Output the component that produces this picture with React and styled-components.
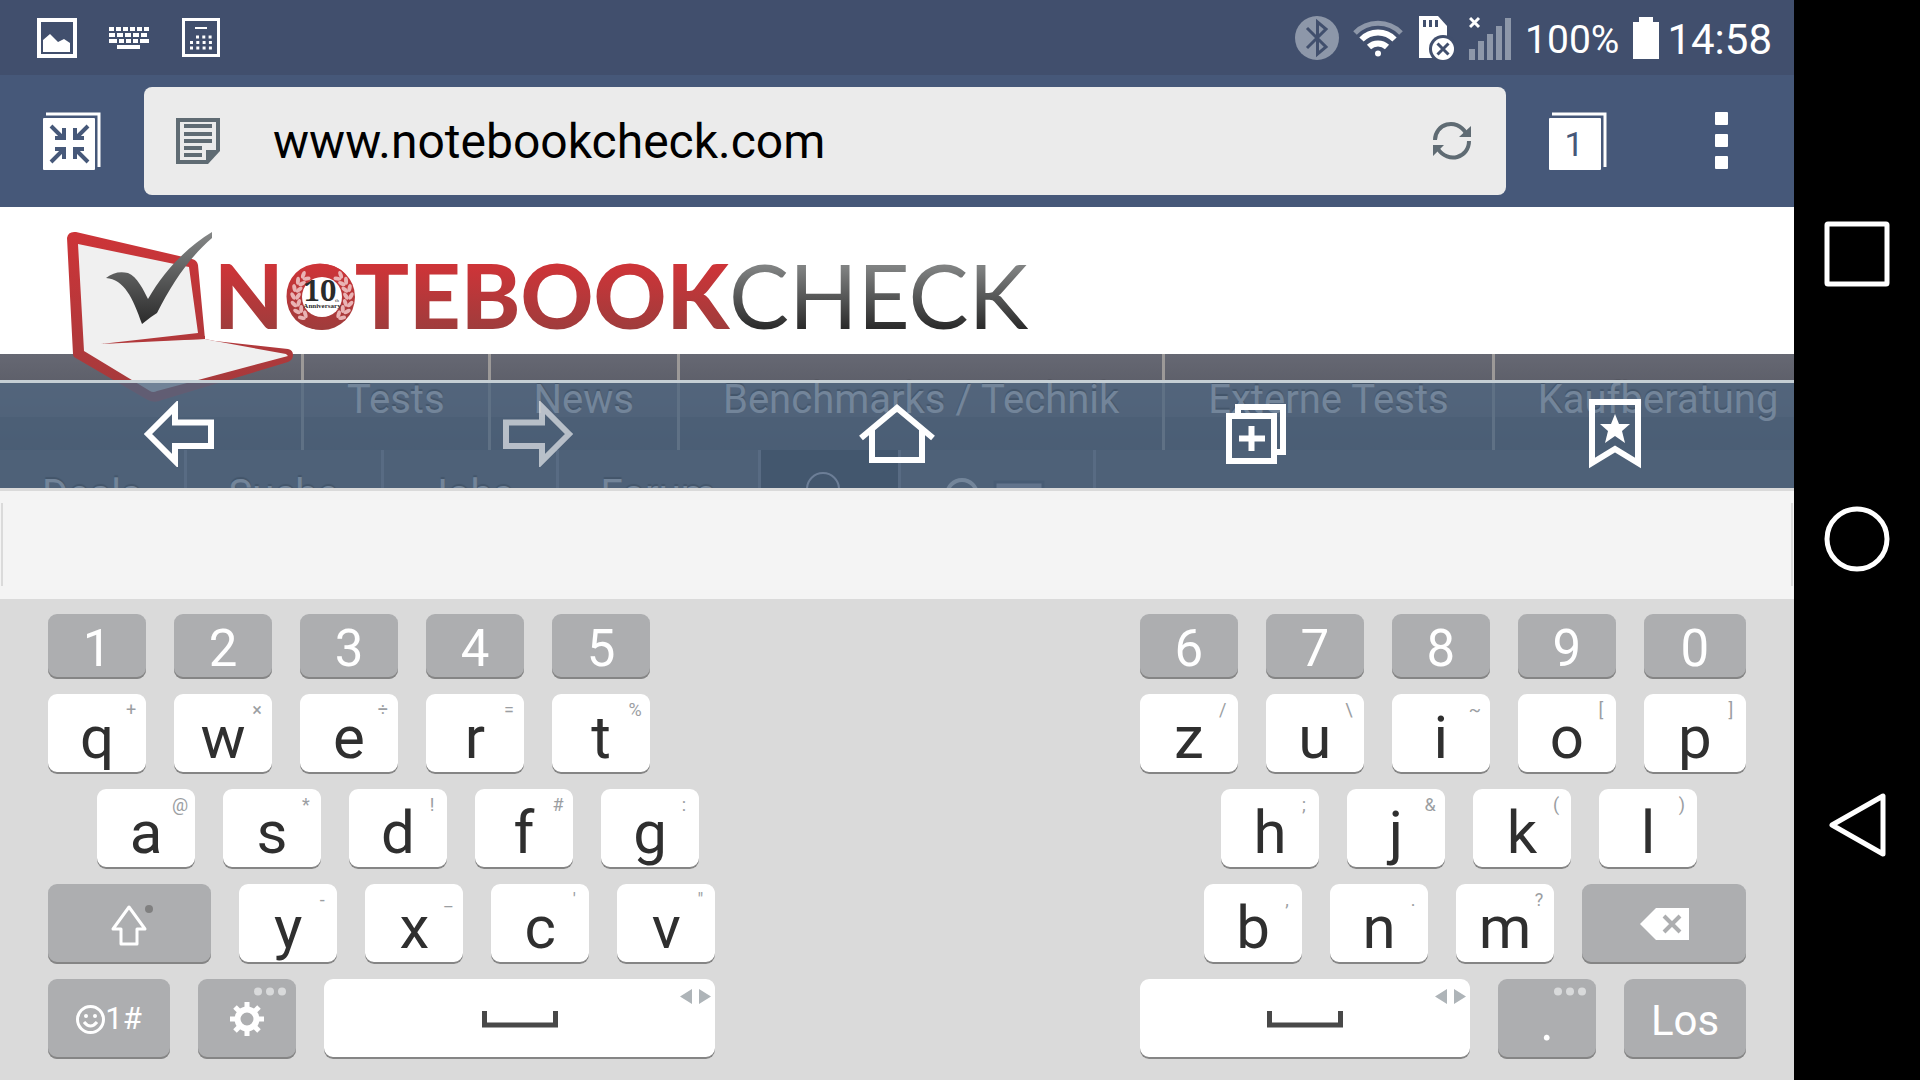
import React from 'react';
import styled, { createGlobalStyle } from 'styled-components';

const GlobalStyle = createGlobalStyle`
  * {
    box-sizing: border-box;
  }

  body {
    margin: 0;
    background: #000;
    font-family: Roboto, 'Noto Sans', sans-serif;
  }

  button {
    border: 0;
    padding: 0;
    background: none;
    font-family: inherit;
    color: inherit;
  }

  svg {
    display: block;
    flex: none;
  }
`;

const Device = styled.div`
  display: flex;
  min-height: 100vh;
`;

const Screen = styled.main`
  flex: 1;
  min-width: 0;
  display: flex;
  flex-direction: column;
`;

// ---------- status bar ----------

const StatusBar = styled.header`
  display: flex;
  align-items: center;
  justify-content: space-between;
  height: 75px;
  padding: 0 22px 0 37px;
  background: #414f6d;
  color: #fff;
`;

const StatusGroup = styled.div`
  display: flex;
  align-items: center;
  gap: ${props => props.$gap}px;
`;

const StatusText = styled.span`
  font-size: ${props => props.$size}px;
  line-height: 48px;
  padding-top: 4px;
`;

// ---------- address bar ----------

const AddressBar = styled.form`
  display: flex;
  align-items: center;
  height: 132px;
  padding: 12px 66px 12px 43px;
  background: #465879;
`;

const UrlBox = styled.div`
  flex: 1;
  display: flex;
  align-items: center;
  height: 108px;
  margin: 0 43px;
  padding: 0 35px 0 32px;
  border-radius: 8px;
  background: #ebebeb;
`;

const UrlInput = styled.input`
  flex: 1;
  min-width: 0;
  height: 80px;
  margin-left: 53px;
  padding: 0;
  border: 0;
  outline: 0;
  background: transparent;
  color: #000;
  font-family: inherit;
  font-size: 48px;
`;

const MenuButton = styled.button`
  margin-left: 108px;
`;

// ---------- web page ----------

const Page = styled.section`
  position: relative;
  height: 281px;
  overflow: hidden;
  background: #fff;
`;

const LogoBox = styled.div`
  position: relative;
  z-index: 1;
  height: 147px;

  svg {
    width: 100%;
    height: 100%;
    overflow: visible;
  }
`;

const NavRow = styled.nav`
  display: flex;
  height: ${props => (props.$sub ? 90 : 96)}px;
  padding-left: ${props => (props.$sub ? 0 : 301)}px;
  background: ${props => (props.$sub
    ? '#464d58'
    : 'linear-gradient(#666873 0, #53555f 63px, #3f444e 63px, #363c47 100%)')};
`;

const NavLink = styled.a`
  flex: none;
  padding: 0 ${props => (props.$sub ? 42 : 43)}px;
  border-left: ${props => (props.$first ? 0 : 3)}px solid ${props => (props.$sub ? '#777f8a' : '#9c9998')};
  color: #fff;
  font-size: 40px;
  line-height: ${props => (props.$sub ? 90 : 92)}px;
  text-decoration: none;
  text-shadow: 0 -2px 1px #111;
  white-space: nowrap;
`;

const NavTool = styled.button`
  flex: none;
  display: flex;
  justify-content: center;
  width: ${props => props.$width}px;
  padding: 21px ${props => (props.$dark ? 12 : 0)}px 0 0;
  border-left: 3px solid #777f8a;
  background: ${props => (props.$dark ? '#0f1b27' : 'none')};
`;

const NavEnd = styled.div`
  border-left: 3px solid #777f8a;
`;

// translucent bar over the lower part of the page
const BrowserBar = styled.div`
  position: absolute;
  z-index: 2;
  left: 0;
  right: 0;
  bottom: 0;
  display: flex;
  height: 108px;
  padding-bottom: 3px;
  border-top: 3px solid #c5cfd5;
  background: rgba(80, 102, 129, 0.8);
`;

const BarButton = styled.button`
  flex: 1;
  display: flex;
  align-items: center;
  justify-content: center;
  opacity: ${props => (props.disabled ? 0.6 : 1)};
`;

// ---------- keyboard ----------

const Suggestions = styled.div`
  height: 111px;
  padding: 12px 1px 13px;
  border-top: 3px solid #dadada;
  background: #f4f4f4;

  div {
    height: 83px;
    border: solid #dadada;
    border-width: 0 2px;
  }
`;

const Keyboard = styled.section`
  flex: 1;
  display: flex;
  justify-content: space-between;
  padding: 15px 48px 21px;
  background: #dadada;
`;

const Half = styled.div`
  display: flex;
  flex-direction: column;
  gap: 15px;
  width: ${props => props.$width};
`;

const KeyRow = styled.div`
  display: flex;
  gap: 28px;
  justify-content: ${props => props.$justify || 'flex-start'};
  padding: 0 ${props => (props.$inset ? 49 : 0)}px;
`;

const KeyCap = styled.button`
  position: relative;
  display: flex;
  align-items: center;
  justify-content: center;
  flex: ${props => (props.$grow ? '1 1 0' : 'none')};
  width: ${props => props.$width || 98}px;
  height: ${props => (props.$kind === 'digit' ? 65 : 80)}px;
  border-radius: 9px;
  background: ${props => (props.$kind === 'letter' ? '#fff' : '#adaeb0')};
  box-shadow: inset 0 -2px 0 #858585;
  color: ${props => (props.$kind === 'letter' ? '#2f2f2f' : '#fff')};
  font-size: ${props => props.$size || 60}px;
  line-height: 70px;
`;

const Label = styled.span`
  padding-top: ${props => (props.$low ? 8 : 4)}px;
`;

const Hint = styled.small`
  position: absolute;
  top: 4px;
  right: 0;
  width: 30px;
  color: #9b9ea2;
  font-size: 18px;
  line-height: 24px;
  text-align: center;
`;

const Corner = styled.span`
  position: absolute;
  top: 8px;
  right: ${props => props.$right}px;
`;

const SymbolLabel = styled.span`
  display: flex;
  align-items: center;
  font-size: 31px;
`;

// ---------- system buttons ----------

const SystemBar = styled.aside`
  display: flex;
  flex-direction: column;
  align-items: center;
  justify-content: space-around;
  width: 126px;
  padding: 111px 0 112px;
  background: #000;
`;

const leftLetters = [
  [['q', '+'], ['w', '×'], ['e', '÷'], ['r', '='], ['t', '%']],
  [['a', '@'], ['s', '*'], ['d', '!'], ['f', '#'], ['g', ':']],
  [['y', '-'], ['x', '_'], ['c', "'"], ['v', '"']],
];

const rightLetters = [
  [['z', '/'], ['u', '\\'], ['i', '~'], ['o', '['], ['p', ']']],
  [['h', ';'], ['j', '&'], ['k', '('], ['l', ')']],
  [['b', ','], ['n', '.'], ['m', '?']],
];

const Letters = ({ keys, growLast }) => keys.map(([letter, hint], i) => (
  <KeyCap type="button" key={letter} $kind="letter" $grow={growLast && i === keys.length - 1}>
    <Label $low>{letter}</Label>
    <Hint>{hint}</Hint>
  </KeyCap>
));

const Digits = ({ keys, growLast }) => keys.map((digit, i) => (
  <KeyCap type="button" key={digit} $kind="digit" $size={51} $grow={growLast && i === keys.length - 1}>
    <Label>{digit}</Label>
  </KeyCap>
));

const Dots = () => (
  <Corner $right={10}>
    <svg width="32" height="9" fill="#d9dadb">
      <circle cx="4" cy="4.500" r="4" />
      <circle cx="16" cy="4.500" r="4" />
      <circle cx="28" cy="4.500" r="4" />
    </svg>
  </Corner>
);

const SpaceKey = () => (
  <KeyCap type="button" $kind="letter" $grow aria-label="Space">
    <svg width="76" height="17">
      <path d="M2.500 0V14H73.500V0" fill="none" stroke="#484848" strokeWidth="5" />
    </svg>
    <Corner $right={4}>
      <svg width="31" height="18" fill="#aeb4b8">
        <path d="M12 2V17L0 9.500zM19 2V17L31 9.500z" />
      </svg>
    </Corner>
  </KeyCap>
);

const StatusIcons = () => (
  <StatusGroup $gap={32}>
    <svg width="40" height="40">
      <rect x="2" y="2" width="36" height="36" fill="none" stroke="#fff" strokeWidth="4" />
      <path d="M6 34V22L13 16L21 24L27 21L33 25V34z" fill="#fff" />
    </svg>
    <svg width="41" height="22" fill="none" stroke="#fff" strokeWidth="4">
      <path d="M0 2H40" strokeDasharray="5 2" />
      <path d="M0 8H40" strokeDasharray="6 2" />
      <path d="M0 14H8M10 14H15M17 14H22M24 14H29M31 14H40" />
      <path d="M8 20H31" />
    </svg>
    <svg width="39" height="39" fill="none" stroke="#fff">
      <rect x="1.500" y="1.500" width="35" height="36" strokeWidth="3" />
      <path d="M13 10H25" strokeWidth="2" />
      <path d="M14 19H32M8 24.500H32M8 30H32" strokeWidth="3" strokeDasharray="3 3.300" />
    </svg>
  </StatusGroup>
);

const Bluetooth = () => (
  <svg width="44" height="44">
    <circle cx="22" cy="22" r="22" fill="#8d97a9" />
    <path d="M12 12L31 31L22.500 38V6L31 13L12 32" fill="none" stroke="#414f6d" strokeWidth="3" />
  </svg>
);

const Wifi = () => (
  <svg width="52" height="38" fill="none" strokeWidth="5">
    <path d="M2 14A32 32 0 0 1 48 14" stroke="#8d97a9" />
    <path d="M8.500 20.500A23 23 0 0 1 41.500 20.500" stroke="#fff" strokeWidth="6" />
    <path d="M16 28A13 13 0 0 1 34 28" stroke="#fff" strokeWidth="6" />
    <circle cx="25" cy="34.500" r="3" fill="#fff" />
  </svg>
);

const SdCard = () => (
  <svg width="36" height="46">
    <path d="M0 1H19L28 11V43H0z" fill="#fff" />
    <path d="M5.500 5V12M11.500 5V12M17.500 5V12" stroke="#414f6d" strokeWidth="3" />
    <circle cx="24" cy="34" r="14" fill="#414f6d" />
    <circle cx="24" cy="34" r="11" fill="#fff" />
    <path d="M18.500 28.500L29.500 39.500M29.500 28.500L18.500 39.500" stroke="#414f6d" strokeWidth="3" />
  </svg>
);

const Signal = () => (
  <svg width="42" height="44">
    <path d="M3 44V33M12 44V25M21 44V18M30 44V10M39 44V2" stroke="#8d97a9" strokeWidth="6" />
    <path d="M1 2L10 11M10 2L1 11" stroke="#fff" strokeWidth="3" />
  </svg>
);

// one branch of the laurel wreath, two leaves per step
const Branch = () => [-50, -34, -18, -2, 14, 30, 46].map(angle => (
  <g key={angle} transform={`rotate(${angle})`} fill="#e9b3b4">
    <ellipse cx="29" cy="0" rx="4" ry="2" transform="rotate(-60 29 0)" />
    <ellipse cx="24" cy="0" rx="4" ry="2" transform="rotate(-120 24 0)" />
  </g>
));

const Logo = () => (
  <svg role="img" aria-label="Notebookcheck">
    <defs>
      <linearGradient id="red" x1="0" y1="60" x2="0" y2="121" gradientUnits="userSpaceOnUse">
        <stop offset="0" stopColor="#cd3438" />
        <stop offset="1" stopColor="#a03c3c" />
      </linearGradient>
      <linearGradient id="frame" x1="0" y1="25" x2="0" y2="180" gradientUnits="userSpaceOnUse">
        <stop offset="0" stopColor="#cd3438" />
        <stop offset="1" stopColor="#a63a3c" />
      </linearGradient>
      <linearGradient id="grey" x1="0" y1="60" x2="0" y2="121" gradientUnits="userSpaceOnUse">
        <stop offset="0" stopColor="#808282" />
        <stop offset="1" stopColor="#2b2b2b" />
      </linearGradient>
      <linearGradient id="tick" x1="0" y1="25" x2="0" y2="117" gradientUnits="userSpaceOnUse">
        <stop offset="0" stopColor="#868888" />
        <stop offset="1" stopColor="#2b2b2b" />
      </linearGradient>
    </defs>
    <path
      d="M67 31Q68 24 76 25L192 52Q197 53 198 58L205 132L215 134L288 142Q293 143 293 148Q293 153 288 155L162 193Q154 197 146 192L74 150Q73 149 73 147z"
      fill="url(#frame)"
    />
    <path d="M78 37L189 60L198 126L101 137L205 132L215 134L286 147L288 149L157 184Q153 186 150 184L84 144z" fill="#f0f0f0" />
    <path d="M101 137L205 129V132Q150 133 101 137z" fill="url(#frame)" />
    <path
      d="M106 71Q116 63 128 66C137 69 144 84 148 92C166 61 189 39 212 25V31C189 51 173 75 157 106L151 110L142 117C133 91 124 72 106 71z"
      fill="url(#tick)"
    />
    <text x="214" y="122" fontFamily="Lato" fontWeight="900" fontSize="90" fill="url(#red)">NOTEBOOK</text>
    <text x="729" y="122" fontFamily="Lato" fontWeight="400" fontSize="90" fill="url(#grey)">CHECK</text>
    <circle cx="322" cy="90" r="33" fill="url(#red)" />
    <g transform="translate(322 90)"><Branch /></g>
    <g transform="translate(322 90) scale(-1 1)"><Branch /></g>
    <circle cx="322" cy="90" r="20" fill="#fff" />
    <text x="320" y="94" textAnchor="middle" fontFamily="Noto Serif, Liberation Serif" fontWeight="700" fontSize="29" fill="#2b2b2b">10</text>
    <text x="335" y="95" fontFamily="Liberation Serif" fontSize="5" fill="#2b2b2b">th</text>
    <text x="322" y="101" textAnchor="middle" fontFamily="Liberation Serif" fontWeight="700" fontSize="7" fill="#2b2b2b">Anniversary</text>
  </svg>
);

const App = () => (
  <Device>
    <GlobalStyle />
    <Screen>
      <StatusBar>
        <StatusIcons />
        <StatusGroup $gap={14}>
          <Bluetooth />
          <Wifi />
          <SdCard />
          <Signal />
          <StatusText $size={39}>100%</StatusText>
          <StatusGroup $gap={8}>
            <svg width="26" height="42">
              <path d="M0 5H6V0H20V5H26V42H0z" fill="#fff" />
            </svg>
            <StatusText $size={42}>14:58</StatusText>
          </StatusGroup>
        </StatusGroup>
      </StatusBar>

      <AddressBar onSubmit={e => e.preventDefault()}>
        <button type="button" aria-label="Exit full screen">
          <svg width="58" height="58">
            <path d="M3 2H56V55" fill="none" stroke="#fff" strokeWidth="3" />
            <rect y="6" width="52" height="52" rx="1" fill="#fff" />
            <path
              d="M8 14L20 26M12 26H21V16M45 14L33 26M41 26H32V16M8 50L20 38M12 37H21V47M45 50L33 38M41 37H32V47"
              fill="none"
              stroke="#465879"
              strokeWidth="4"
            />
          </svg>
        </button>
        <UrlBox>
          <svg width="44" height="46">
            <path d="M0 0H44V33L32 46H0z" fill="#5f6b73" />
            <path d="M4 4H40V32H30V42H4z" fill="#ebebeb" />
            <path d="M8 8H36M8 16H36M8 23H36M8 30H26M8 37H26" stroke="#5f6b73" strokeWidth="4" />
          </svg>
          <UrlInput type="text" aria-label="Address" defaultValue="www.notebookcheck.com" />
          <button type="button" aria-label="Reload">
            <svg width="38" height="40">
              <path d="M2 19C2 3 23 -4 33 12M36 20C36 37 15 43 5 28" fill="none" stroke="#5f6b73" strokeWidth="4" />
              <path d="M38 5V16H26zM0 35V24H11z" fill="#5f6b73" />
            </svg>
          </button>
        </UrlBox>
        <button type="button" aria-label="1 open tab">
          <svg width="58" height="58">
            <path d="M3 2H56V55" fill="none" stroke="#fff" strokeWidth="3" />
            <rect y="6" width="52" height="52" rx="1" fill="#fff" />
            <text x="25" y="44" textAnchor="middle" fontSize="34" fill="#465879">1</text>
          </svg>
        </button>
        <MenuButton type="button" aria-label="Menu">
          <svg width="13" height="58" fill="#fff">
            <rect width="13" height="13" rx="1" />
            <rect y="22" width="13" height="13" rx="1" />
            <rect y="44" width="13" height="13" rx="1" />
          </svg>
        </MenuButton>
      </AddressBar>

      <Page>
        <LogoBox>
          <Logo />
        </LogoBox>
        <NavRow>
          <NavLink href="#tests">Tests</NavLink>
          <NavLink href="#news">News</NavLink>
          <NavLink href="#benchmarks">Benchmarks / Technik</NavLink>
          <NavLink href="#externe">Externe Tests</NavLink>
          <NavLink href="#kaufberatung">Kaufberatung</NavLink>
        </NavRow>
        <NavRow $sub>
          <NavLink $sub $first href="#deals">Deals</NavLink>
          <NavLink $sub href="#suche">Suche</NavLink>
          <NavLink $sub href="#jobs">Jobs</NavLink>
          <NavLink $sub href="#forum">Forum</NavLink>
          <NavTool $dark $width={140} aria-label="Search">
            <svg width="36" height="36">
              <circle cx="18" cy="18" r="16" fill="none" stroke="#dde" strokeWidth="2" />
            </svg>
          </NavTool>
          <NavTool $width={195} aria-label="Language">
            <svg width="106" height="40">
              <circle cx="18" cy="24" r="15" fill="none" stroke="#fff" strokeWidth="4" />
              <rect x="51" y="11" width="48" height="28" fill="#aab" stroke="#2a3442" strokeWidth="3" />
            </svg>
          </NavTool>
          <NavEnd />
        </NavRow>

        <BrowserBar>
          <BarButton aria-label="Back">
            <svg width="70" height="66">
              <path d="M4 33L31 6V21.500H67V45H31V60z" fill="none" stroke="#fff" strokeWidth="6" />
            </svg>
          </BarButton>
          <BarButton aria-label="Forward" disabled>
            <svg width="70" height="66">
              <path d="M66 33L39 6V21.500H3V45H39V60z" fill="none" stroke="#fff" strokeWidth="6" />
            </svg>
          </BarButton>
          <BarButton aria-label="Home">
            <svg width="76" height="60" fill="none" stroke="#fff" strokeWidth="6">
              <path d="M2 34L38 4L74 34M13 26V56H63V26" />
            </svg>
          </BarButton>
          <BarButton aria-label="New tab">
            <svg width="60" height="60" fill="none" stroke="#fff" strokeWidth="6">
              <path d="M12 9V3H57V48H51" />
              <rect x="3" y="12" width="45" height="45" />
              <path d="M13 34.500H39M25.500 22V47" />
            </svg>
          </BarButton>
          <BarButton aria-label="Bookmarks">
            <svg width="52" height="70">
              <path d="M3 3H49V64L26 50L3 64z" fill="none" stroke="#fff" strokeWidth="6" />
              <path d="M26 15L30 25H41L33 32L36 44L26 37L16 44L19 32L11 25H22z" fill="#fff" />
            </svg>
          </BarButton>
        </BrowserBar>
      </Page>

      <Suggestions><div /></Suggestions>

      <Keyboard>
        <Half $width="39.3%">
          <KeyRow><Digits keys={['1', '2', '3', '4', '5']} /></KeyRow>
          <KeyRow><Letters keys={leftLetters[0]} /></KeyRow>
          <KeyRow $inset><Letters keys={leftLetters[1]} /></KeyRow>
          <KeyRow>
            <KeyCap type="button" $kind="dark" $grow aria-label="Shift">
              <svg width="48" height="44">
                <path d="M23 5L39 27H31V42H15V27H7z" fill="none" stroke="#fff" strokeWidth="3" strokeLinejoin="round" />
                <circle cx="43" cy="7" r="4" fill="#808080" />
              </svg>
            </KeyCap>
            <Letters keys={leftLetters[2]} />
          </KeyRow>
          <KeyRow>
            <KeyCap type="button" $kind="dark" $width={122}>
              <SymbolLabel>
                <svg width="29" height="29" fill="none" stroke="#fff" strokeWidth="3">
                  <circle cx="14.500" cy="14.500" r="13" />
                  <path d="M8 17Q14.500 25 21 17" />
                  <circle cx="10" cy="11" r="2" fill="#fff" stroke="none" />
                  <circle cx="19" cy="11" r="2" fill="#fff" stroke="none" />
                </svg>
                1#
              </SymbolLabel>
            </KeyCap>
            <KeyCap type="button" $kind="dark" aria-label="Settings">
              <svg width="34" height="34" viewBox="-17 -17 34 34">
                <circle r="9.500" fill="none" stroke="#fff" strokeWidth="6" />
                <path
                  d="M0 -17V-11M0 17V11M-17 0H-11M17 0H11M-12 -12L-8 -8M12 -12L8 -8M-12 12L-8 8M12 12L8 8"
                  stroke="#fff"
                  strokeWidth="5"
                />
              </svg>
              <Dots />
            </KeyCap>
            <SpaceKey />
          </KeyRow>
        </Half>

        <Half $width="35.7%">
          <KeyRow><Digits growLast keys={['6', '7', '8', '9', '0']} /></KeyRow>
          <KeyRow><Letters growLast keys={rightLetters[0]} /></KeyRow>
          <KeyRow $inset $justify="flex-end"><Letters keys={rightLetters[1]} /></KeyRow>
          <KeyRow $justify="flex-end">
            <Letters keys={rightLetters[2]} />
            <KeyCap type="button" $kind="dark" $width={164} aria-label="Delete">
              <svg width="49" height="32">
                <path d="M16 0H49V32H16L0 16z" fill="#fff" />
                <path d="M24 8L40 24M40 8L24 24" stroke="#adaeb0" strokeWidth="4" />
              </svg>
            </KeyCap>
          </KeyRow>
          <KeyRow>
            <SpaceKey />
            <KeyCap type="button" $kind="dark" $size={51}>
              <Label $low>.</Label>
              <Dots />
            </KeyCap>
            <KeyCap type="button" $kind="dark" $width={122} $size={42}>
              <Label>Los</Label>
            </KeyCap>
          </KeyRow>
        </Half>
      </Keyboard>
    </Screen>

    <SystemBar>
      <button aria-label="Recent apps">
        <svg width="66" height="66">
          <rect x="3" y="3" width="60" height="60" rx="1" fill="none" stroke="#fff" strokeWidth="5" />
        </svg>
      </button>
      <button aria-label="Home">
        <svg width="66" height="66">
          <circle cx="33" cy="33" r="30" fill="none" stroke="#fff" strokeWidth="5" />
        </svg>
      </button>
      <button aria-label="Back">
        <svg width="66" height="66">
          <path d="M8 33L59 4V62z" fill="none" stroke="#fff" strokeWidth="5" strokeLinejoin="round" />
        </svg>
      </button>
    </SystemBar>
  </Device>
);

export default App;
